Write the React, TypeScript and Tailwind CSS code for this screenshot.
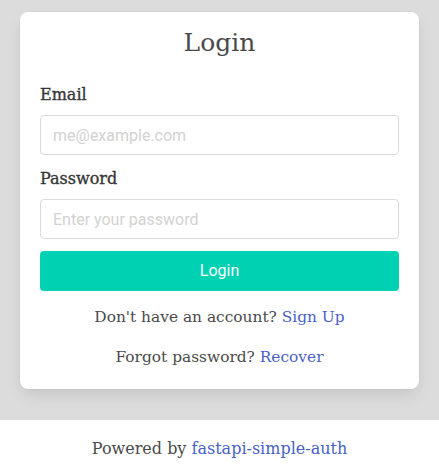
export default function App() {
  const serif = { fontFamily: '"DejaVu Serif", "Liberation Serif", serif' };
  const sans = { fontFamily: 'Roboto, "Liberation Sans", sans-serif' };
  return (
    <div className="w-[439px] min-h-[476px] bg-white" style={serif}>
      <div className="bg-[#dcdcdc] px-5 pt-3 pb-[31px]">
        <div className="bg-white rounded-lg px-5 pt-4 pb-5 shadow-[0_8px_16px_-2px_rgba(10,10,10,0.1),0_0_0_1px_rgba(10,10,10,0.02)]">
          <h1 className="text-[25px] leading-[30px] text-center text-[#4a4a4a]">Login</h1>
          <label className="block mt-[25px] text-[16px] leading-6 text-[#363636] [-webkit-text-stroke:0.35px_#363636]">Email</label>
          <input
            className="mt-2 block w-full h-10 rounded border border-[#dbdbdb] px-3 text-[16px] text-[#363636] placeholder:text-[#d2d2d2] outline-none"
            style={sans}
            placeholder="me@example.com"
          />
          <label className="block mt-3 text-[16px] leading-6 text-[#363636] [-webkit-text-stroke:0.35px_#363636]">Password</label>
          <input
            type="password"
            className="mt-2 block w-full h-10 rounded border border-[#dbdbdb] px-3 text-[16px] text-[#363636] placeholder:text-[#d2d2d2] outline-none"
            style={sans}
            placeholder="Enter your password"
          />
          <button
            className="mt-3 block w-full h-10 rounded bg-[#00d1b2] text-white text-[16px]"
            style={sans}
          >
            Login
          </button>
          <p className="mt-[14px] text-center text-[15.4px] leading-6 text-[#4a4a4a]">
            Don't have an account? <a className="text-[#485fc7]">Sign Up</a>
          </p>
          <p className="mt-[16px] text-center text-[15.4px] leading-6 text-[#4a4a4a]">
            Forgot password? <a className="text-[#485fc7]">Recover</a>
          </p>
        </div>
      </div>
      <p className="pt-[17px] text-center text-[16px] leading-6 text-[#4a4a4a]">
        Powered by <a className="text-[#485fc7]">fastapi-simple-auth</a>
      </p>
    </div>
  );
}
